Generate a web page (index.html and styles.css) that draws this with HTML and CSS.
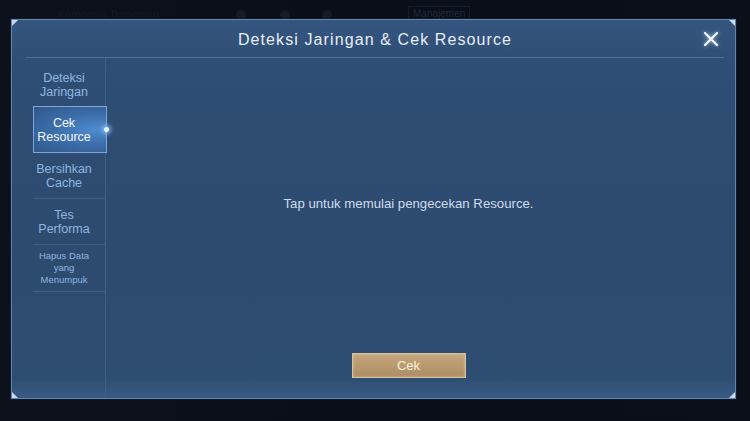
FILE: index.html
```html
<!DOCTYPE html>
<html>
<head>
<meta charset="utf-8">
<link rel="stylesheet" href="styles.css">
</head>
<body>
<div class="backdrop">
  <div class="ghost-bar">
    <span class="ghost-text g1">Kompetisi Turnamen</span>
    <span class="ghost-dot d1"></span>
    <span class="ghost-dot d2"></span>
    <span class="ghost-dot d3"></span>
    <span class="ghost-tag">Manajemen</span>
  </div>
  <div class="panel">
    <span class="corner tl"></span>
    <span class="corner tr"></span>
    <span class="corner bl"></span>
    <span class="corner br"></span>
    <div class="header">
      <h1 class="title">Deteksi Jaringan &amp; Cek Resource</h1>
      <button class="close" aria-label="Tutup">
        <svg width="16" height="16" viewBox="0 0 16 16"><path d="M2 2 L14 14 M14 2 L2 14" stroke="#f4f8ff" stroke-width="2.2" stroke-linecap="round"/></svg>
      </button>
    </div>
    <div class="body">
      <nav class="sidebar">
        <div class="item">Deteksi<br>Jaringan</div>
        <div class="item active">Cek<br>Resource<span class="pip"></span></div>
        <div class="item">Bersihkan<br>Cache</div>
        <div class="item">Tes<br>Performa</div>
        <div class="item small">Hapus Data<br>yang<br>Menumpuk</div>
      </nav>
      <main class="content">
        <p class="message">Tap untuk memulai pengecekan Resource.</p>
        <button class="cek">Cek</button>
      </main>
    </div>
  </div>
</div>
</body>
</html>
```

FILE: styles.css
```css
html, body {
  margin: 0;
  padding: 0;
}
body {
  width: 750px;
  height: 421px;
  overflow: hidden;
  background: #0a0e17;
  font-family: "Liberation Sans", Arial, sans-serif;
}
.backdrop {
  width: 750px;
  height: 421px;
  background: linear-gradient(90deg, #0c111c 0%, #0a0e18 50%, #0b0f19 100%);
}
.ghost-bar {
  height: 19px;
  position: relative;
}
.ghost-text {
  position: absolute;
  top: 8px;
  left: 58px;
  font-size: 11px;
  color: #131a26;
}
.ghost-dot {
  position: absolute;
  top: 10px;
  width: 10px;
  height: 10px;
  border-radius: 50%;
  background: #141b27;
}
.d1 { left: 236px; }
.d2 { left: 280px; }
.d3 { left: 322px; }
.ghost-tag {
  position: absolute;
  top: 6px;
  left: 408px;
  padding: 1px 4px;
  font-size: 10px;
  color: #1f2838;
  border: 1px solid #151c2a;
}
.panel {
  position: relative;
  margin-left: 11px;
  width: 723px;
  height: 378px;
  border: 1px solid #6484ae;
  background:
    linear-gradient(180deg, rgba(255,255,255,0) 0%, rgba(255,255,255,0) 95%, rgba(120,170,220,0.14) 100%),
    linear-gradient(180deg, #34557e 0%, #2f4e75 12%, #2d4a6f 60%, #2f4e74 100%);
  box-shadow: 0 0 0 1px rgba(20,30,50,0.6);
  display: flex;
  flex-direction: column;
}
.corner {
  position: absolute;
  width: 0;
  height: 0;
}
.corner.tl { top: 0; left: 0; border-top: 6px solid #c9d8ec; border-right: 6px solid transparent; }
.corner.tr { top: 0; right: 0; border-top: 6px solid #c9d8ec; border-left: 6px solid transparent; }
.corner.bl { bottom: 0; left: 0; border-bottom: 6px solid #c9d8ec; border-right: 6px solid transparent; }
.corner.br { bottom: 0; right: 0; border-bottom: 6px solid #c9d8ec; border-left: 6px solid transparent; }
.header {
  position: relative;
  height: 37px;
  margin: 0 11px 0 14px;
  border-bottom: 1px solid #4f6f97;
  display: flex;
  align-items: center;
  justify-content: center;
}
.title {
  margin: 2px 0 0 0;
  font-size: 16px;
  font-weight: normal;
  letter-spacing: 1.1px;
  color: #e6eef8;
}
.close {
  position: absolute;
  right: 5px;
  top: 11px;
  padding: 0;
  border: 0;
  background: none;
  width: 16px;
  height: 16px;
  filter: drop-shadow(0 0 2px rgba(200,225,255,0.8));
}
.close svg { display: block; }
.body {
  flex: 1;
  display: flex;
}
.sidebar {
  width: 78px;
  margin-left: 15px;
  padding-top: 6px;
  border-right: 1px solid #3f5f88;
  display: flex;
  flex-direction: column;
}
.item {
  position: relative;
  height: 46px;
  margin-left: 6px;
  padding-right: 10px;
  display: flex;
  align-items: center;
  justify-content: center;
  text-align: center;
  font-size: 12.5px;
  line-height: 14px;
  color: #8fb6e0;
  border-bottom: 1px solid #3f5e85;
  box-sizing: border-box;
}
.item:first-child {
  height: 42px;
  border-bottom: 0;
}
.item.active {
  height: 47px;
  margin-right: -2px;
  padding-right: 12px;
  color: #f2f6fc;
  border: 1px solid #7ea6d8;
  background: radial-gradient(ellipse at 85% 50%, #4f8bd0 0%, #3d6fab 45%, #2f578a 100%);
}
.pip {
  position: absolute;
  right: -3px;
  top: 20px;
  width: 5px;
  height: 5px;
  border-radius: 50%;
  background: #e6f2ff;
  box-shadow: 0 0 4px 2px rgba(140,200,255,0.8);
}
.item.small {
  font-size: 9.5px;
  line-height: 12px;
  height: 47px;
}
.content {
  flex: 1;
  margin-right: 24px;
  display: flex;
  flex-direction: column;
  align-items: center;
}
.message {
  margin: 138px 0 0 0;
  font-size: 13.2px;
  color: #cfdcec;
}
.cek {
  margin-top: 142px;
  width: 114px;
  height: 25px;
  padding: 0;
  font-family: "Liberation Sans", Arial, sans-serif;
  font-size: 13px;
  color: #fbf1dc;
  border: 1px solid #d6c29c;
  background: linear-gradient(180deg, #c5a67c 0%, #b99a6f 50%, #ad8d63 100%);
  box-shadow: inset 0 0 3px rgba(255,240,210,0.4);
}
```
